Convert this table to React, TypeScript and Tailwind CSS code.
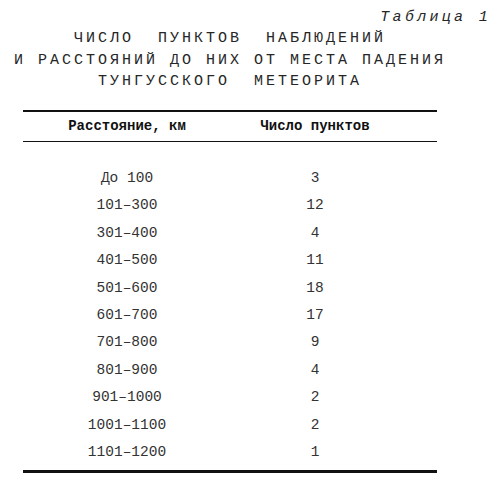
import React from 'react';

const rows: [string, string][] = [
  ['До 100', '3'],
  ['101–300', '12'],
  ['301–400', '4'],
  ['401–500', '11'],
  ['501–600', '18'],
  ['601–700', '17'],
  ['701–800', '9'],
  ['801–900', '4'],
  ['901–1000', '2'],
  ['1001–1100', '2'],
  ['1101–1200', '1'],
];

const mono = "font-['Liberation_Mono','Courier_New',monospace]";

export default function App() {
  return (
    <div className={`w-[500px] h-[482px] bg-white text-[#262626] ${mono}`}>
      {/* Caption */}
      <div className="pt-[7px] text-[15px] leading-[21.3px]">
        <div className="text-right pr-[9px] italic tracking-[3.3px]">Таблица 1</div>
        <div className="w-[460px] text-center tracking-[3px] whitespace-pre">
          <div>ЧИСЛО  ПУНКТОВ  НАБЛЮДЕНИЙ</div>
          <div>И РАССТОЯНИЙ ДО НИХ ОТ МЕСТА ПАДЕНИЯ</div>
          <div>ТУНГУССКОГО  МЕТЕОРИТА</div>
        </div>
      </div>

      {/* Table */}
      <div className="mt-[18px] ml-[23px] w-[414px] border-t-2 border-b-[3px] border-[#111]">
        <div className="flex h-[30px] items-center border-b border-[#111] text-[14px] font-bold text-[#111]">
          <div className="w-[208px] text-center">Расстояние, км</div>
          <div className="w-[168px] text-center">Число пунктов</div>
        </div>
        <div className="pt-[23px] pb-[4px] text-[14.5px] text-[#333]">
          {rows.map(([d, n]) => (
            <div key={d} className="flex h-[27.4px] items-center">
              <div className="w-[208px] text-center">{d}</div>
              <div className="w-[168px] text-center">{n}</div>
            </div>
          ))}
        </div>
      </div>
    </div>
  );
}
